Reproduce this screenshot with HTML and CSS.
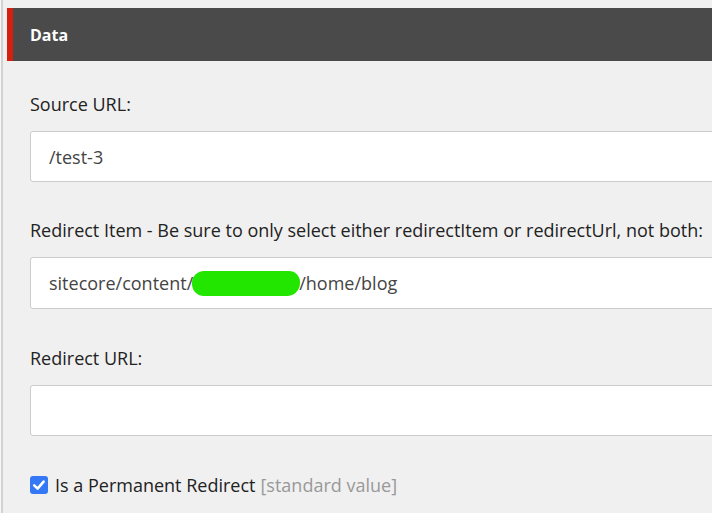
FILE: index.html
```html
<!DOCTYPE html>
<html>
<head>
<meta charset="utf-8">
<link rel="stylesheet" href="styles.css">
</head>
<body>
<div class="frame">
  <div class="panel">
    <div class="header"><span class="title">Data</span></div>
    <div class="fields">
      <div class="field first">
        <label class="label">Source URL:</label>
        <div class="input">/test-3</div>
      </div>
      <div class="field">
        <label class="label">Redirect Item - Be sure to only select either redirectItem or redirectUrl, not both:</label>
        <div class="input tall">sitecore/content/<span class="redact">p</span>/home/blog</div>
      </div>
      <div class="field">
        <label class="label">Redirect URL:</label>
        <div class="input"></div>
      </div>
      <div class="check">
        <span class="box"><svg viewBox="0 0 18 18" width="18" height="18"><path d="M4.2 9.4 L7.6 12.6 L13.6 5.6" fill="none" stroke="#fff" stroke-width="2.6" stroke-linecap="round" stroke-linejoin="round"/></svg></span>
        <span class="check-label">Is a Permanent Redirect</span>
        <span class="std">[standard value]</span>
      </div>
    </div>
  </div>
</div>
</body>
</html>
```

FILE: styles.css
```css
html, body {
  margin: 0;
  padding: 0;
  background: #f0f0f0;
  overflow: hidden;
}
body {
  width: 712px;
  height: 513px;
  font-family: "Open Sans", "Liberation Sans", sans-serif;
  color: #1f1f1f;
}
.frame {
  height: 513px;
  border-left: 1px solid #f7f7f7;
  box-sizing: border-box;
  display: flex;
  overflow: hidden;
}
.frame::before {
  content: "";
  width: 2px;
  flex: none;
  background: #d2d2d2;
}
.panel {
  flex: 1;
  padding: 8px 0 0 4px;
  min-width: 0;
}
.header {
  height: 53px;
  background: #4a4a4a;
  border-left: 6px solid #d3200f;
  display: flex;
  align-items: center;
  padding-left: 17px;
}
.title {
  color: #fff;
  font-weight: 700;
  font-size: 16px;
}
.fields {
  padding: 31px 0 0 23px;
}
.field {
  margin-bottom: 37px;
}
.field.first {
  margin-bottom: 36px;
}
.label {
  display: block;
  font-size: 18px;
  line-height: 25px;
  color: #222;
  margin-bottom: 14px;
}
.input {
  width: 720px;
  height: 51px;
  box-sizing: border-box;
  background: #fff;
  border: 1px solid #cccccc;
  border-radius: 3px;
  padding: 0 18px;
  display: flex;
  align-items: center;
  font-size: 18px;
  color: #444;
  white-space: nowrap;
}
.input.tall {
  height: 52px;
}
.redact {
  display: inline-block;
  width: 108px;
  height: 25px;
  background: #22e600;
  border-radius: 12px 11px 13px 12px;
  color: transparent;
  margin: 1px -1px 0 -1px;
}
.check {
  display: flex;
  align-items: center;
  margin-top: 37px;
  font-size: 18px;
}
.box {
  width: 18px;
  height: 18px;
  border-radius: 3px;
  background: #3478f6;
  display: inline-flex;
  margin-right: 7px;
}
.check-label {
  color: #222;
}
.std {
  color: #999;
  margin-left: 5px;
}
```
